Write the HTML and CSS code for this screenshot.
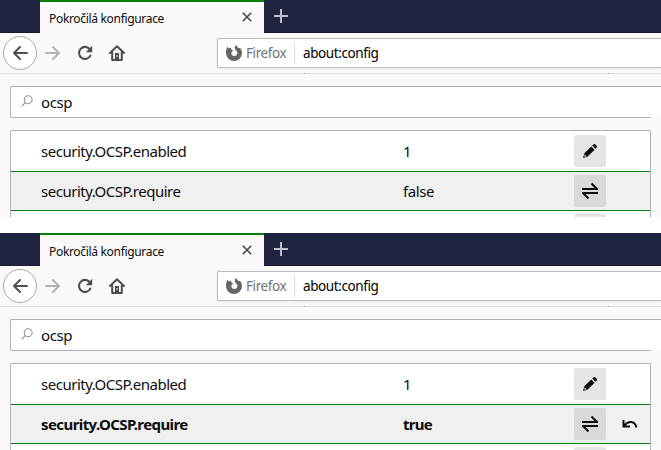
FILE: index.html
```html
<!DOCTYPE html>
<html lang="cs">
<head>
<meta charset="utf-8">
<title>Pokročilá konfigurace</title>
<link rel="stylesheet" href="styles.css">
</head>
<body>
<svg class="defs" width="0" height="0">
  <symbol id="back" viewBox="0 0 16 16"><path d="M15 8H2M8 2 2 8l6 6" fill="none" stroke="currentColor" stroke-width="2" stroke-linecap="round" stroke-linejoin="round"/></symbol>
  <symbol id="forward" viewBox="0 0 16 16"><path d="M1 8h13M8 2l6 6-6 6" fill="none" stroke="currentColor" stroke-width="2" stroke-linecap="round" stroke-linejoin="round"/></symbol>
  <symbol id="reload" viewBox="0 0 16 16"><path d="M12.6 4A6 6 0 1 0 13.4 10.6" fill="none" stroke="currentColor" stroke-width="2.1" stroke-linecap="round"/><path d="M15.2 .8v6.4H8.8z" fill="currentColor"/></symbol>
  <symbol id="home" viewBox="0 0 16 16"><path d="M1 8 8 1.2 15 8M3.2 7.5V15h9.6V7.5" fill="none" stroke="currentColor" stroke-width="2" stroke-linecap="round" stroke-linejoin="round"/><path d="M6 8h4v6H6z" fill="currentColor"/><path d="M8 10v2" stroke="#f9f9fa"/></symbol>
  <symbol id="firefox" viewBox="0 0 16 16"><path d="M8 16A8 8 0 0 1 0 8C0 5.500 .5 3.500 1.500 1.800L3 3.600 5 2.400 5.300 4.500 7.300 5.500 5.800 6.700C4.600 8.300 5.900 11 8.200 11 10.600 11 11.700 9.100 11.400 7.500 11.100 5.900 9.200 5 8.800 3.500 8.500 2 9.200 .6 10.600 0 10.500 1.500 11.600 2.300 12.900 3.200L13.800 2.800C15.200 4 16 6 16 8A8 8 0 0 1 8 16Z" fill="currentColor"/></symbol>
  <symbol id="close" viewBox="0 0 10 10"><path d="m.8.8 8.400 8.400m0-8.400L.8 9.200" stroke="currentColor" stroke-width="1.600"/></symbol>
  <symbol id="plus" viewBox="0 0 14 14"><path d="M7 0v14M0 7h14" stroke="currentColor" stroke-width="2"/></symbol>
  <symbol id="search" viewBox="0 0 12 12"><circle cx="7.200" cy="4.700" r="3.900" fill="none" stroke="currentColor" stroke-width="1.100"/><path d="M4.400 7.500.8 11.100" stroke="currentColor" stroke-width="1.100"/></symbol>
  <symbol id="pencil" viewBox="0 0 16 16"><path d="M1 15 2.400 10.300 9.300 3.400 12.600 6.700 5.700 13.600ZM10.200 2.500 11.300 1.400Q12.500.5 13.800 1.700L14.300 2.200Q15.500 3.500 14.600 4.700L13.500 5.800Z" fill="currentColor"/><path d="m2.800 11.500 1.700 1.700-1.700.6-.6-.6z" fill="#e5e5e5"/></symbol>
  <symbol id="toggle" viewBox="0 0 16 16"><path d="M0 6h15L9.500.5M16 10H1l5.500 5.500" fill="none" stroke="currentColor" stroke-width="2"/></symbol>
  <symbol id="undo" viewBox="0 0 16 12"><path d="M2 6.500C7 1 13 2 14.500 8.500M1.500 1v6.500H8" fill="none" stroke="currentColor" stroke-width="2"/></symbol>
</svg>

<section class="window">
  <header class="tabs">
    <div class="tab"><span class="title">Pokročilá konfigurace</span><svg class="close"><use href="#close"/></svg></div>
    <svg class="plus"><use href="#plus"/></svg>
  </header>
  <nav class="toolbar">
    <span class="back"><svg class="icon"><use href="#back"/></svg></span>
    <svg class="icon forward"><use href="#forward"/></svg>
    <svg class="icon reload"><use href="#reload"/></svg>
    <svg class="icon home"><use href="#home"/></svg>
    <div class="address"><svg class="icon"><use href="#firefox"/></svg><span class="brand">Firefox</span><span class="url">about:config</span></div>
  </nav>
  <main>
    <div class="search"><svg><use href="#search"/></svg><span class="query">ocsp</span></div>
    <div class="prefs">
      <div class="row first"><span class="name">security.OCSP.enabled</span><span class="value">1</span><span class="button"><svg class="icon"><use href="#pencil"/></svg></span></div>
      <div class="row shaded"><span class="name">security.OCSP.require</span><span class="value">false</span><span class="button dark"><svg class="icon"><use href="#toggle"/></svg></span></div>
      <div class="row"><span class="name"></span><span class="value"></span><span class="button"></span></div>
    </div>
  </main>
</section>

<section class="window">
  <header class="tabs">
    <div class="tab"><span class="title">Pokročilá konfigurace</span><svg class="close"><use href="#close"/></svg></div>
    <svg class="plus"><use href="#plus"/></svg>
  </header>
  <nav class="toolbar">
    <span class="back"><svg class="icon"><use href="#back"/></svg></span>
    <svg class="icon forward"><use href="#forward"/></svg>
    <svg class="icon reload"><use href="#reload"/></svg>
    <svg class="icon home"><use href="#home"/></svg>
    <div class="address"><svg class="icon"><use href="#firefox"/></svg><span class="brand">Firefox</span><span class="url">about:config</span></div>
  </nav>
  <main>
    <div class="search"><svg><use href="#search"/></svg><span class="query">ocsp</span></div>
    <div class="prefs">
      <div class="row first"><span class="name">security.OCSP.enabled</span><span class="value">1</span><span class="button"><svg class="icon"><use href="#pencil"/></svg></span></div>
      <div class="row shaded modified"><span class="name">security.OCSP.require</span><span class="value">true</span><span class="button dark"><svg class="icon"><use href="#toggle"/></svg></span><svg class="undo"><use href="#undo"/></svg></div>
      <div class="row"><span class="name"></span><span class="value"></span><span class="button"></span></div>
    </div>
  </main>
</section>
</body>
</html>
```

FILE: styles.css
```css
* { box-sizing: border-box; }
body { margin: 0; height: 450px; overflow: hidden; background: #fff; color: #0c0c0d; font-family: "Noto Sans", sans-serif; font-size: 14px; display: flex; flex-direction: column; gap: 16px; }
svg { display: block; flex: none; }
.defs { position: absolute; }
.icon { width: 16px; height: 16px; }
.window { height: 217px; flex: none; overflow: hidden; background: #f9f9fa; }
.tabs { height: 33px; display: flex; padding-left: 40px; background: #202340; border-bottom: 1px solid #15182e; }
.tab { width: 224px; height: 33px; flex: none; border-top: 2px solid #008000; background: #f9f9fa; display: flex; justify-content: space-between; padding: 0 12px 0 9px; }
.title { font-size: 12px; line-height: 33px; letter-spacing: -.32px; white-space: nowrap; }
.close { width: 10px; height: 10px; margin-top: 10px; color: #48484b; }
.plus { width: 14px; height: 14px; margin: 9px 0 0 10px; color: #bcbdc8; }
.toolbar { position: relative; height: 41px; display: flex; align-items: center; padding-left: 3px; color: #4e4e50; border-bottom: 1px solid #dedede; }
.toolbar::after { content: ""; position: absolute; left: 304px; bottom: -1px; width: 1px; height: 1px; background: #aaa; box-shadow: 304px 0 #aaa; }
.back { width: 34px; height: 34px; flex: none; border: 1px solid #aaa; border-radius: 50%; background: #fff; display: grid; place-items: center; }
.forward { margin-left: 8px; color: #b2b2b3; }
.reload { margin-left: 16px; }
.home { margin-left: 16px; }
.address { height: 30px; flex: 1; margin-left: 92px; padding-left: 8px; display: flex; align-items: center; background: #fff; border: 1px solid #bbb; border-right: 0; border-radius: 2px 0 0 2px; box-shadow: 0 1px 3px #0001; }
.address .icon { color: #666; }
.brand { width: 49px; height: 22px; line-height: 23px; margin-left: 4px; border-right: 1px solid #ddd; color: #737373; font-size: 13.5px; letter-spacing: -.4px; }
.url { margin-left: 8px; line-height: 22px; color: #000; font-size: 13.5px; letter-spacing: -.4px; }
main { padding: 12px 0 0 10px; }
.search { position: relative; height: 32px; display: flex; align-items: center; padding-left: 10px; background: #fff; border: 1px solid #b1b1b1; border-right: 0; border-radius: 2px 0 0 2px; }
.search::after { content: ""; position: absolute; right: 0; bottom: -1px; width: 10px; height: 2px; background: #f9f9fa; }
.search svg { width: 12px; height: 12px; margin-top: -2px; color: #929292; }
.query { margin-left: 8px; font-size: 15px; line-height: 22px; letter-spacing: -.4px; }
.prefs { width: 641px; height: 120px; margin-top: 12px; border: 1px solid #b1b1b1; border-bottom: 0; border-radius: 2px 2px 0 0; background: #fff; }
.row { height: 39px; display: flex; align-items: center; padding-left: 30px; border-top: 1px solid #008000; font-size: 15px; }
.row.first { height: 40px; border-top: 0; }
.shaded { background: #f0f0f0; }
.modified { font-weight: 700; }
.name { width: 362px; letter-spacing: -.48px; }
.value { width: 171px; letter-spacing: -.4px; }
.modified .name { letter-spacing: -.58px; }
.modified .value { letter-spacing: -.7px; }
.button { width: 32px; height: 32px; border-radius: 2px; background: #e5e5e5; display: grid; place-items: center; }
.dark { background: #d9d9d9; }
.undo { width: 16px; height: 12px; margin: 1px 0 0 16px; }
```
